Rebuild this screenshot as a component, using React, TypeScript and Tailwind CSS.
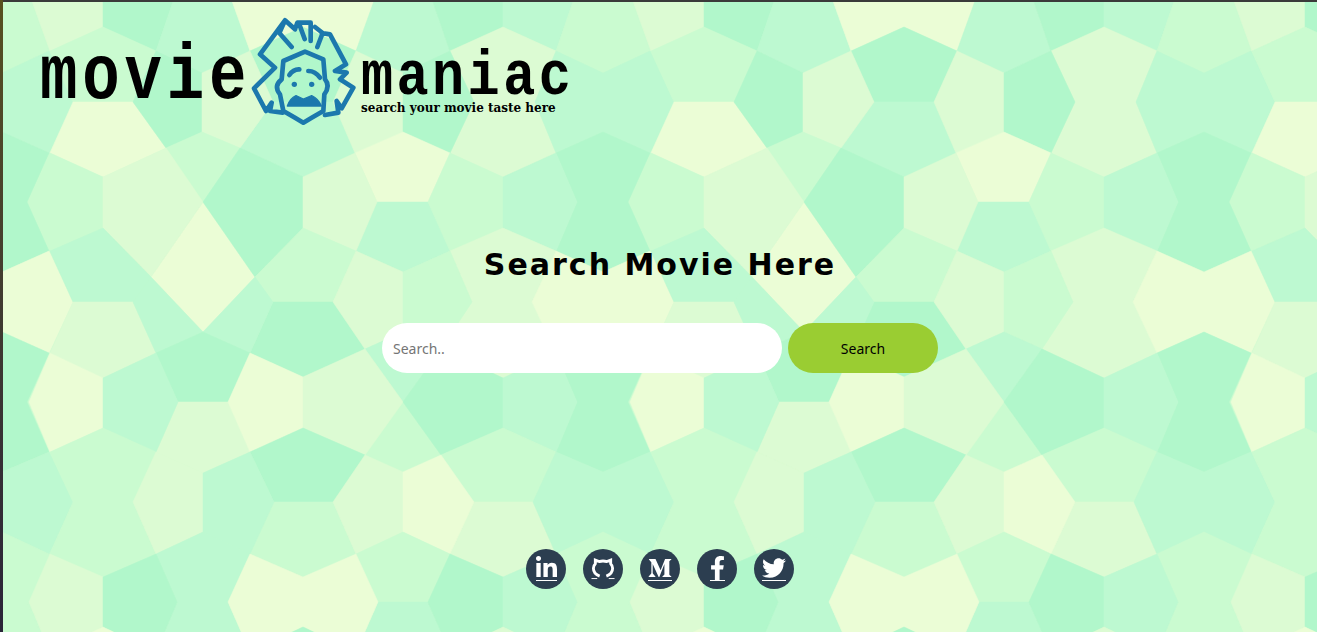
import { FaFacebookF, FaLinkedinIn, FaMediumM, FaTwitter } from 'react-icons/fa';

const colors = {
  a: '#b1f7cb',
  b: '#bdf9d1',
  c: '#cafbd0',
  d: '#dcfbd3',
  e: '#ebfdd6',
};

type Tone = keyof typeof colors;

// one horizontal period of the pentagon pattern, repeated every 601px
const tiles: [Tone, string][] = [
  // top band
  ['d', '28,-10 103,-10 103,27 50,51'],
  ['a', '103,-10 177,-10 156,51 103,27'],
  ['b', '177,-10 228,-10 250,51 202,73 156,51'],
  ['e', '228,-10 303,-10 303,27 250,51'],
  ['e', '303,-10 378,-10 356,51 303,27'],
  ['b', '378,-10 429,-10 450,51 403,73 356,51'],
  ['a', '429,-10 503,-10 503,27 450,51'],
  ['b', '503,-10 577,-10 556,51 503,27'],
  ['c', '577,-10 629,-10 650,51 603,73 556,51'],
  // y 27 - 177
  ['c', '103,27 156,51 133,102 73,102 50,51'],
  ['a', '303,27 356,51 333,102 273,102 250,51'],
  ['d', '503,27 556,51 535,102 474,102 450,51'],
  ['e', '73,102 133,102 166,148 103,177 50,153'],
  ['b', '273,102 333,102 355,153 303,177 240,148'],
  ['d', '474,102 535,102 556,153 503,177 450,153'],
  ['a', '156,51 202,73 202,132 166,148 133,102'],
  ['d', '250,51 273,102 240,148 202,132 202,73'],
  ['d', '356,51 403,73 403,132 355,153 333,102'],
  ['a', '450,51 474,102 450,153 403,132 403,73'],
  ['b', '556,51 603,73 603,132 556,153 535,102'],
  ['b', '650,51 674,102 650,153 603,132 603,73'],
  // y 132 - 332
  ['c', '202,132 240,148 203,202 166,148'],
  ['e', '403,132 450,153 428,202 377,202 355,153'],
  ['a', '603,132 650,153 628,202 577,202 556,153'],
  ['b', '377,202 428,202 450,251 403,272 356,251'],
  ['a', '577,202 628,202 650,251 603,272 556,251'],
  ['e', '203,202 255,277 203,332 151,277'],
  ['c', '50,153 103,177 103,228 50,251 29,202'],
  ['d', '103,177 166,148 203,202 151,277 103,228'],
  ['a', '303,177 240,148 203,202 255,277 303,228'],
  ['d', '303,177 355,153 377,202 356,251 303,228'],
  ['c', '503,177 450,153 428,202 450,251 503,228'],
  ['b', '503,177 556,153 577,202 556,251 503,228'],
  // y 228 - 378
  ['b', '103,228 151,277 133,302 73,302 50,251'],
  ['c', '303,228 356,251 333,302 273,302 255,277'],
  ['d', '503,228 556,251 532,302 472,302 450,251'],
  ['d', '73,302 133,302 156,353 103,378 50,353'],
  ['a', '273,302 333,302 365,349 303,377 250,353'],
  ['d', '472,302 532,302 556,353 503,378 441,349'],
  ['b', '151,277 203,332 156,353 133,302'],
  ['b', '255,277 273,302 250,353 203,332'],
  ['d', '356,251 403,272 403,332 365,349 333,302'],
  ['c', '450,251 472,302 441,349 403,332 403,272'],
  ['e', '556,251 603,272 603,332 556,353 532,302'],
  ['e', '650,251 674,302 650,353 603,332 603,272'],
  // y 332 - 473
  ['b', '403,332 441,349 403,402 365,349'],
  ['a', '156,353 203,332 250,353 228,402 178,402'],
  ['a', '556,353 603,332 650,353 628,402 577,402'],
  ['d', '178,402 228,402 250,452 203,473 156,452'],
  ['a', '577,402 628,402 650,452 603,472 556,452'],
  ['c', '403,402 441,455 403,472 365,455'],
  ['e', '50,353 103,378 103,428 50,452 29,402'],
  ['b', '156,353 178,402 156,452 103,428 103,378'],
  ['e', '250,353 303,377 303,428 250,452 228,402'],
  ['d', '365,349 403,402 365,455 303,428 303,377'],
  ['a', '441,349 503,378 503,428 441,455 403,402'],
  ['b', '556,353 577,402 556,452 503,428 503,378'],
  // y 428 - 577
  ['c', '103,428 156,452 133,502 73,502 50,452'],
  ['a', '303,428 365,455 333,502 274,502 250,452'],
  ['c', '503,428 556,452 533,502 474,502 441,455'],
  ['c', '73,502 133,502 156,554 103,577 50,554'],
  ['c', '274,502 333,502 356,554 303,577 250,554'],
  ['d', '474,502 533,502 556,554 503,577 450,554'],
  ['d', '156,452 203,473 203,532 156,554 133,502'],
  ['b', '250,452 274,502 250,554 203,532 203,473'],
  ['d', '365,455 403,472 403,532 356,554 333,502'],
  ['e', '441,455 474,502 450,554 403,532 403,472'],
  ['b', '556,452 603,472 603,532 556,554 533,502'],
  ['b', '650,452 674,502 650,554 603,532 603,472'],
  // bottom band
  ['b', '156,554 203,532 250,554 228,602 177,602'],
  ['c', '356,554 403,532 450,554 428,602 378,602'],
  ['c', '556,554 603,532 650,554 628,602 577,602'],
  ['b', '177,602 228,602 250,652 156,652'],
  ['b', '378,602 428,602 450,652 356,652'],
  ['c', '577,602 628,602 650,652 556,652'],
  ['d', '50,554 103,577 103,627 50,652 29,602'],
  ['a', '156,554 177,602 156,652 103,627 103,577'],
  ['e', '250,554 303,577 303,627 250,652 228,602'],
  ['e', '356,554 378,602 356,652 303,627 303,577'],
  ['a', '450,554 503,577 503,627 450,652 428,602'],
  ['b', '556,554 577,602 556,652 503,627 503,577'],
  ['e', '103,627 156,652 50,652'],
  ['a', '303,627 356,652 250,652'],
  ['d', '503,627 556,652 450,652'],
];

const Background = () => (
  <svg className="absolute inset-0 h-full w-full" viewBox="0 0 1314 630" preserveAspectRatio="none" aria-hidden="true">
    <rect width="1314" height="630" fill={colors.c} />
    {[-604, -3, 598, 1199].map((dx) => (
      <g key={dx} transform={`translate(${dx} -2)`}>
        {tiles.map(([tone, points], i) => (
          <polygon key={i} points={points} fill={colors[tone]} stroke={colors[tone]} strokeWidth="0.5" />
        ))}
      </g>
    ))}
  </svg>
);

const Face = () => (
  <svg width="114" height="110" viewBox="27 15 330 330" fill="none" stroke="#1c78ad" strokeWidth="14" strokeLinejoin="round" strokeLinecap="round" className="shrink-0">
    <path d="M155 108 L118 66 L135 28 L165 55 L172 35 L212 35 L212 90 M178 40 L194 84 M225 48 L248 66 L232 108 M245 66 L270 70 L318 160 L285 180 L320 185 L300 205 L340 230 L305 292 L290 270 L295 305 L255 312 M135 28 L60 130 L105 170 L42 232 L78 300 L95 275 L90 300 L128 305" />
    <path d="M130 150 L195 122 L250 145 L255 205 Q272 225 253 250 L250 300 L215 320 L190 335 L165 320 L130 300 L120 250 Q100 225 125 205 Z" />
    <path d="M148 192 Q160 174 178 175 M205 180 Q226 180 240 200" />
    <circle cx="163" cy="220" r="8" fill="#1c78ad" stroke="none" />
    <circle cx="215" cy="220" r="8" fill="#1c78ad" stroke="none" />
    <path d="M142 285 Q150 262 168 254 L190 264 L215 254 Q236 264 244 285 Z" fill="#1c78ad" strokeWidth="4" />
  </svg>
);

// cat outline with the link underline broken by its legs
const GithubCat = () => (
  <svg viewBox="0 0 24 25" className="h-6 w-6" fill="none" stroke="white" aria-hidden="true">
    <path
      d="M8.5 21 C4.5 19.5 2 16.8 2 12.8 C2 10.8 2.8 9.2 4 8 L4 4.2 L8 5.8 C10 5.2 14 5.2 16 5.8 L20 4.2 L20 8 C21.2 9.2 22 10.8 22 12.8 C22 16.8 19.5 19.5 15.5 21"
      strokeWidth="3"
    />
    <path d="M0 23.5 H6 M18 23.5 H24" strokeWidth="1" />
  </svg>
);

const socials = [
  { name: 'linkedin', line: 'border-white', icon: <FaLinkedinIn className="h-6 w-[21px]" /> },
  { name: 'github', line: 'border-transparent', icon: <GithubCat /> },
  { name: 'medium', line: 'border-white', icon: <FaMediumM className="h-6 w-6" /> },
  { name: 'facebook', line: 'border-white', icon: <FaFacebookF className="h-6 w-[15px]" /> },
  { name: 'twitter', line: 'border-white', icon: <FaTwitter className="h-6 w-6" /> },
];

export default function App() {
  return (
    <div className="flex h-[632px] w-full bg-[#3a3a3a]">
      <div className="w-[3px] shrink-0 bg-gradient-to-b from-[#57501f] to-[#2a2438]" />
      <div className="relative mt-[2px] flex min-w-0 flex-1 flex-col overflow-hidden">
        <Background />

        <header className="relative flex h-[126px] items-start pl-[37px] pt-[14px]">
          <span className="mt-[22px] w-[207px] origin-left scale-x-[0.8] whitespace-nowrap font-['Liberation_Mono',monospace] text-[78px] leading-[78px] font-bold tracking-[6px] text-black">
            movie
          </span>
          <Face />
          <div className="flex flex-col">
            <span className="mt-[40px] w-[212px] origin-left scale-x-[0.85] whitespace-nowrap font-['Liberation_Mono',monospace] text-[63px] leading-[44px] font-bold tracking-[4px] text-black">
              maniac
            </span>
            <span className="whitespace-nowrap font-['DejaVu_Serif',serif] text-[12px] leading-[16px] font-bold text-black">
              search your movie taste here
            </span>
          </div>
        </header>

        <main className="relative flex flex-1 flex-col items-center">
          <h1 className="mt-[117px] font-['DejaVu_Sans',sans-serif] text-[30px] leading-[40px] font-bold tracking-[2px] text-black">
            Search Movie Here
          </h1>
          <form className="mt-[38px] flex gap-[6px]">
            <input
              type="text"
              placeholder="Search.."
              className="h-[50px] w-[400px] rounded-[25px] bg-white px-[11px] font-['Noto_Sans',sans-serif] text-[14px] outline-none placeholder:text-[#757575]"
            />
            <button type="button" className="h-[50px] w-[150px] rounded-[25px] bg-[#9acd32] font-['Noto_Sans',sans-serif] text-[14px] text-black">
              Search
            </button>
          </form>
          <div className="mt-[176px] flex gap-[17px]">
            {socials.map(({ name, line, icon }) => (
              <a key={name} href="#" aria-label={name} className="flex h-10 w-10 items-start justify-center rounded-full bg-[#2c3e50] pt-[7px]">
                <span className={`border-b text-white ${line}`}>{icon}</span>
              </a>
            ))}
          </div>
        </main>
      </div>
    </div>
  );
}
